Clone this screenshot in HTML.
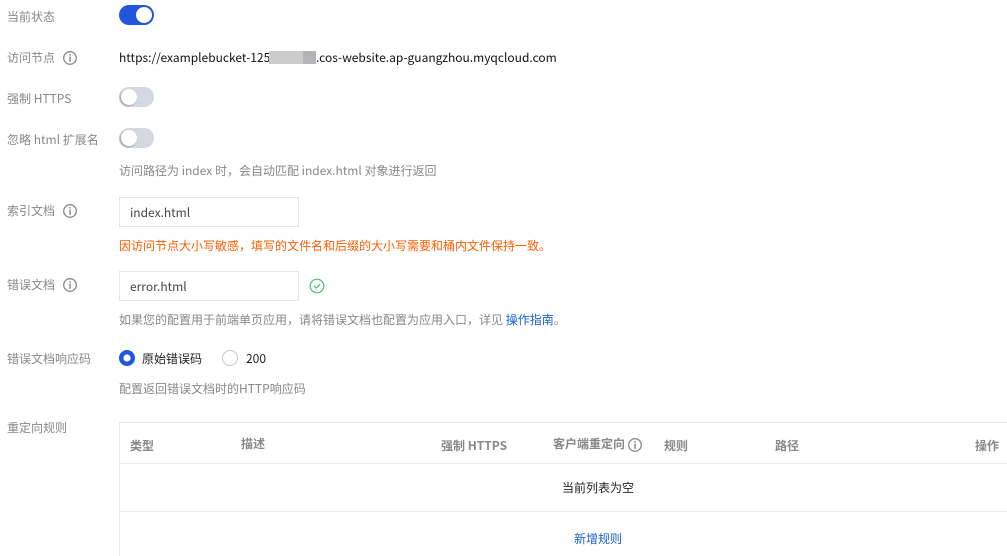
<!DOCTYPE html>
<html lang="zh">
<head>
<meta charset="utf-8">
<style>
html,body{margin:0;padding:0;background:#fff}
body{width:1007px;height:556px;position:relative;overflow:hidden;font-family:"Noto Sans CJK SC","Liberation Sans",sans-serif;font-size:12px;color:#000}
.t{position:absolute;white-space:nowrap;line-height:18px}
.l{color:#888;left:7px}
.h{color:#888;left:119px}
.th{color:#888;font-weight:700}
.sw{position:absolute;left:119px;width:35px;height:20px;border-radius:10px;background:#d5d8e1}
.sw i{position:absolute;left:2px;top:2px;width:16px;height:16px;border-radius:50%;background:#fff;box-shadow:-1px 1px 2px rgba(0,0,0,.3)}
.sw.on{background:#2055dc}
.sw.on i{left:17px;box-shadow:none}
.inp{position:absolute;left:119px;width:178px;height:28px;border:1px solid #e3e6ef;background:#fff}
.inp span{position:absolute;left:10px;top:6px;line-height:18px;color:#444}
svg{position:absolute}
.ln{position:absolute;background:#e8e9f0}
</style>
</head>
<body>
<div class="t l" style="top:8px">当前状态</div>
<div class="sw on" style="top:5px"><i></i></div>

<div class="t l" style="top:49px">访问节点</div>
<svg style="left:63px;top:51px" width="14" height="14" viewBox="0 0 14 14"><circle cx="7" cy="7" r="6.3" fill="none" stroke="#888" stroke-width="1.3"/><rect x="6.3" y="3" width="1.5" height="1.5" fill="#888"/><rect x="6.3" y="5.6" width="1.5" height="5.2" fill="#888"/></svg>
<div class="t" style="left:119px;top:49px;color:#111">https://examplebucket-125</div>
<div style="position:absolute;left:269px;top:51px;width:34px;height:13px;background:#cbcbcc"></div>
<div style="position:absolute;left:303px;top:51px;width:13px;height:13px;background:#b3b4b8"></div>
<div class="t" style="left:316px;top:49px;color:#111">.cos-website.ap-guangzhou.myqcloud.com</div>

<div class="t l" style="top:90px">强制 HTTPS</div>
<div class="sw" style="top:87px"><i></i></div>

<div class="t l" style="top:131px">忽略 html 扩展名</div>
<div class="sw" style="top:128px"><i></i></div>
<div class="t h" style="top:162px">访问路径为 index 时，会自动匹配 index.html 对象进行返回</div>

<div class="t l" style="top:202px">索引文档</div>
<svg style="left:63px;top:204px" width="14" height="14" viewBox="0 0 14 14"><circle cx="7" cy="7" r="6.3" fill="none" stroke="#888" stroke-width="1.3"/><rect x="6.3" y="3" width="1.5" height="1.5" fill="#888"/><rect x="6.3" y="5.6" width="1.5" height="5.2" fill="#888"/></svg>
<div class="inp" style="top:197px"><span>index.html</span></div>
<div class="t" style="left:119px;top:237px;color:#ff5e00">因访问节点大小写敏感，填写的文件名和后缀的大小写需要和桶内文件保持一致。</div>

<div class="t l" style="top:276px">错误文档</div>
<svg style="left:63px;top:278px" width="14" height="14" viewBox="0 0 14 14"><circle cx="7" cy="7" r="6.3" fill="none" stroke="#888" stroke-width="1.3"/><rect x="6.3" y="3" width="1.5" height="1.5" fill="#888"/><rect x="6.3" y="5.6" width="1.5" height="5.2" fill="#888"/></svg>
<div class="inp" style="top:271px"><span>error.html</span></div>
<svg style="left:309px;top:278px" width="16" height="16" viewBox="0 0 16 16"><circle cx="8" cy="8" r="6.8" fill="none" stroke="#46c26b" stroke-width="1.2"/><path d="M5 8l2.2 2.2L11 6.4" fill="none" stroke="#46c26b" stroke-width="1.2"/></svg>
<div class="t h" style="top:311px">如果您的配置用于前端单页应用，请将错误文档也配置为应用入口，详见 <span style="color:#1a5fd0">操作指南</span>。</div>

<div class="t l" style="top:350px">错误文档响应码</div>
<svg style="left:119px;top:350px" width="16" height="16" viewBox="0 0 16 16"><circle cx="8" cy="8" r="5.8" fill="#fff" stroke="#2055dc" stroke-width="4.4"/></svg>
<div class="t" style="left:142px;top:350px;color:#222">原始错误码</div>
<svg style="left:222px;top:350px" width="16" height="16" viewBox="0 0 16 16"><circle cx="8" cy="8" r="7.5" fill="#fff" stroke="#c4c6cc"/></svg>
<div class="t" style="left:246px;top:350px;color:#222">200</div>
<div class="t h" style="top:380px">配置返回错误文档时的HTTP响应码</div>

<div class="t l" style="top:419px">重定向规则</div>
<div class="ln" style="left:119px;top:422px;width:888px;height:1px"></div>
<div class="ln" style="left:119px;top:422px;width:1px;height:134px"></div>
<div class="ln" style="left:120px;top:463px;width:887px;height:1px"></div>
<div class="ln" style="left:120px;top:511px;width:887px;height:1px"></div>
<div class="t th" style="left:130px;top:437px">类型</div>
<div class="t th" style="left:241px;top:435px">描述</div>
<div class="t th" style="left:441px;top:437px">强制 HTTPS</div>
<div class="t th" style="left:553px;top:435px">客户端重定向</div>
<svg style="left:628px;top:438px" width="14" height="14" viewBox="0 0 14 14"><circle cx="7" cy="7" r="6.3" fill="none" stroke="#888" stroke-width="1.3"/><rect x="6.3" y="3" width="1.5" height="1.5" fill="#888"/><rect x="6.3" y="5.6" width="1.5" height="5.2" fill="#888"/></svg>
<div class="t th" style="left:664px;top:437px">规则</div>
<div class="t th" style="left:775px;top:437px">路径</div>
<div class="t th" style="left:975px;top:437px">操作</div>
<div class="t" style="left:562px;top:479px;color:#222">当前列表为空</div>
<div class="t" style="left:574px;top:530px;color:#1a5fd0">新增规则</div>
</body>
</html>
